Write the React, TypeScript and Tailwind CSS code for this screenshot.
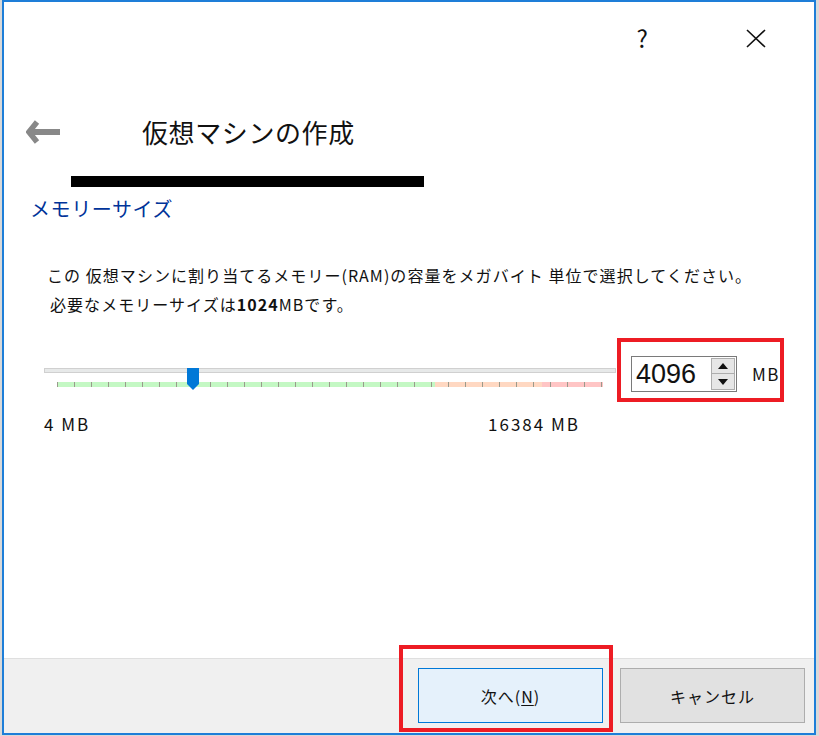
import React from "react";

const ticks = Array.from({ length: 33 }, (_, i) => i);

function Spinner() {
  return (
    <div className="ml-auto mr-[1px] w-[24px] h-[32px] flex flex-col">
      <div className="h-[16px] border border-[#adadad] bg-[#e6e6e6] flex items-center justify-center">
        <svg width="10" height="6" viewBox="0 0 10 6">
          <path d="M0 6L5 0L10 6Z" fill="#111" />
        </svg>
      </div>
      <div className="h-[16px] border border-t-0 border-[#adadad] bg-[#e6e6e6] flex items-center justify-center">
        <svg width="10" height="6" viewBox="0 0 10 6">
          <path d="M0 0L5 6L10 0Z" fill="#111" />
        </svg>
      </div>
    </div>
  );
}

export default function App() {
  return (
    <div className="w-[819px] h-[736px] bg-[#d9d9d9] pl-[2px] overflow-hidden font-['Noto_Sans_CJK_JP',sans-serif] text-[#111]">
      <div className="relative w-[814px] h-[735px] border-2 border-[#1e7ed8] bg-white flex flex-col">
        {/* title bar */}
        <div className="h-[72px] flex items-center justify-end pr-[48px] gap-[98px]">
          <span className="text-[24px] leading-none">?</span>
          <svg width="20" height="19" viewBox="0 0 20 19">
            <path d="M1 1L19 18M19 1L1 18" stroke="#111" strokeWidth="1.6" />
          </svg>
        </div>

        {/* header */}
        <div className="mt-[34px] h-[48px] flex items-center">
          <svg className="ml-[22px]" width="34" height="24" viewBox="0 0 34 24">
            <path d="M11 2L3 12L11 22" fill="none" stroke="#888" strokeWidth="5.5" />
            <path d="M4 12H34" stroke="#888" strokeWidth="6" />
          </svg>
          <h1 className="ml-[82px] text-[26px] leading-[34px] tracking-[0.6px] font-normal">
            仮想マシンの作成
          </h1>
        </div>

        <div className="mt-[20px] ml-[67px] w-[353px] h-[11px] bg-black" />

        <h2 className="mt-[8px] ml-[26px] text-[20px] leading-[28px] tracking-[0.6px] text-[#003399]">
          メモリーサイズ
        </h2>

        <div className="mt-[38px] ml-[43px] text-[16px] leading-[29px] tracking-[1.05px]">
          <div>この 仮想マシンに割り当てるメモリー(RAM)の容量をメガバイト 単位で選択してください。</div>
          <div className="pl-[3px]">
            必要なメモリーサイズは<b className="font-bold">1024</b>MBです。
          </div>
        </div>

        {/* slider row */}
        <div className="mt-[19px] flex items-start">
          <div className="ml-[40px] w-[572px] pt-[22px]">
            <div className="relative">
              <div className="mt-[8px] h-[5px] border border-[#d0d0d0] bg-[#e7e9e9]" />
              <div className="relative mt-[9px] ml-[13px] w-[546px] h-[5px] flex">
                <div className="w-[378px] bg-[#c4f8c4]" />
                <div className="w-[107px] bg-[#ffd8c2]" />
                <div className="w-[61px] bg-[#ffc5c5]" />
                <div className="absolute inset-0 w-[545px] flex justify-between">
                  {ticks.map((t) => (
                    <span key={t} className="w-[1px] h-full bg-[#9a9a8c]" />
                  ))}
                </div>
              </div>
              <svg className="absolute left-[143px] top-0" width="12" height="22" viewBox="0 0 12 22">
                <path d="M0 0H12V16L6 22L0 16Z" fill="#0078d7" />
              </svg>
            </div>
            <div className="mt-[27px] flex justify-between pr-[36px] text-[17px] leading-[20px] tracking-[2px]">
              <span>4 MB</span>
              <span>16384 MB</span>
            </div>
          </div>

          <div className="relative ml-[1px] w-[167px] h-[64px]">
            <div className="mt-[18px] h-[36px] flex items-center pl-[14px]">
              <div className="w-[106px] h-[36px] border border-[#7a7a7a] flex items-center bg-white">
                <span className="pl-[4px] text-[27px] leading-[34px] font-['Liberation_Sans',sans-serif]">
                  4096
                </span>
                <Spinner />
              </div>
              <span className="ml-[15px] text-[17px] tracking-[1.5px]">MB</span>
            </div>
            <div className="absolute inset-0 border-4 border-[#ed1c24] pointer-events-none" />
          </div>
        </div>

        <div className="flex-1" />

        {/* footer */}
        <div className="h-[75px] border-t border-[#dfdfdf] bg-[#f0f0f0] flex justify-end gap-[17px] pt-[9px] pr-[9px]">
          <button className="w-[185px] h-[55px] border border-[#0078d7] bg-[#e5f1fb] text-[16px] tracking-[1px]">
            次へ(<span className="underline underline-offset-2">N</span>)
          </button>
          <button className="w-[185px] h-[55px] border border-[#adadad] bg-[#e1e1e1] text-[16px] tracking-[1px]">
            キャンセル
          </button>
        </div>

        <div className="absolute left-[395px] top-[643px] w-[214px] h-[87px] border-4 border-[#ed1c24] pointer-events-none" />
      </div>
    </div>
  );
}
